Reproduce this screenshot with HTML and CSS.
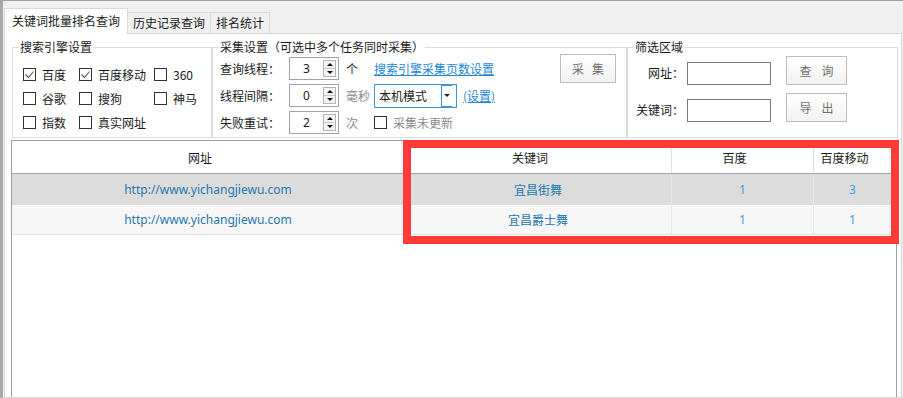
FILE: index.html
```html
<!DOCTYPE html>
<html lang="zh-CN">
<head>
    <meta charset="UTF-8">
    <title>关键词批量排名查询</title>
    <link rel="stylesheet" href="styles.css">
</head>
<body>
    <div class="window">
        <div class="tabs">
            <div class="tab active">关键词批量排名查询</div>
            <div class="tab">历史记录查询</div>
            <div class="tab">排名统计</div>
        </div>

        <div class="tab-page">
            <div class="settings">
                <fieldset class="group engines">
                    <legend>搜索引擎设置</legend>
                    <div class="check-grid">
                        <label class="check"><span class="box"><svg viewBox="0 0 11 11"><polyline points="1.5,5.5 4.5,8.5 9.5,2.5"/></svg></span>百度</label>
                        <label class="check"><span class="box"><svg viewBox="0 0 11 11"><polyline points="1.5,5.5 4.5,8.5 9.5,2.5"/></svg></span>百度移动</label>
                        <label class="check"><span class="box"></span>360</label>
                        <label class="check"><span class="box"></span>谷歌</label>
                        <label class="check"><span class="box"></span>搜狗</label>
                        <label class="check"><span class="box"></span>神马</label>
                        <label class="check"><span class="box"></span>指数</label>
                        <label class="check"><span class="box"></span>真实网址</label>
                    </div>
                </fieldset>

                <fieldset class="group collect">
                    <legend>采集设置（可选中多个任务同时采集）</legend>
                    <div class="collect-body">
                        <div class="collect-rows">
                            <div class="row">
                                <span class="row-label">查询线程：</span>
                                <div class="spinner"><span class="value">3</span><span class="spin"><i class="up"></i><i class="down"></i></span></div>
                                <span class="unit">个</span>
                                <a class="link" href="#">搜索引擎采集页数设置</a>
                            </div>
                            <div class="row">
                                <span class="row-label">线程间隔：</span>
                                <div class="spinner"><span class="value">0</span><span class="spin"><i class="up"></i><i class="down"></i></span></div>
                                <span class="unit muted">毫秒</span>
                                <div class="select"><span>本机模式</span><span class="drop"><i></i></span></div>
                                <a class="link" href="#">(设置)</a>
                            </div>
                            <div class="row">
                                <span class="row-label">失败重试：</span>
                                <div class="spinner"><span class="value">2</span><span class="spin"><i class="up"></i><i class="down"></i></span></div>
                                <span class="unit muted">次</span>
                                <label class="check muted"><span class="box"></span>采集未更新</label>
                            </div>
                        </div>
                        <button class="btn collect-btn"><span>采</span><span>集</span></button>
                    </div>
                </fieldset>

                <fieldset class="group filter">
                    <legend>筛选区域</legend>
                    <div class="filter-body">
                        <span class="filter-label">网址：</span>
                        <span class="input"></span>
                        <button class="btn wide"><span>查</span><span>询</span></button>
                        <span class="filter-label">关键词：</span>
                        <span class="input"></span>
                        <button class="btn wide"><span>导</span><span>出</span></button>
                    </div>
                </fieldset>
            </div>

            <div class="grid">
                <div class="grid-row head">
                    <div class="cell">网址</div>
                    <div class="cell">关键词</div>
                    <div class="cell">百度</div>
                    <div class="cell">百度移动</div>
                </div>
                <div class="grid-row odd">
                    <div class="cell url">http://www.yichangjiewu.com</div>
                    <div class="cell kw">宜昌街舞</div>
                    <div class="cell num">1</div>
                    <div class="cell num">3</div>
                </div>
                <div class="grid-row even">
                    <div class="cell url">http://www.yichangjiewu.com</div>
                    <div class="cell kw">宜昌爵士舞</div>
                    <div class="cell num">1</div>
                    <div class="cell num">1</div>
                </div>
            </div>
        </div>
    </div>

    <!-- 红框标注 -->
    <div class="marker"></div>
</body>
</html>
```

FILE: styles.css
```css
body {
    margin: 0;
    height: 398px;
    overflow: hidden;
    background-color: #f0f0f0;
    font-family: "Noto Sans CJK SC", sans-serif;
    font-size: 12px;
    color: #1a1a1a;
}
.window {
    height: 397px;
    border-top: 1px solid #a0a0a0;
    border-left: 3px solid #a9a9a9;
    display: flex;
    flex-direction: column;
}

/* Tabs */
.tabs {
    display: flex;
    align-items: flex-end;
    padding: 8px 0 0 1px;
    height: 24px;
}
.tab {
    height: 20px;
    line-height: 20px;
    padding: 0 5px;
    border: 1px solid #d9d9d9;
    border-bottom: none;
    border-left: none;
    background-color: #f0f0f0;
}
.tab.active {
    height: 25px;
    line-height: 23px;
    padding: 0 7px;
    border-left: 1px solid #d9d9d9;
    background-color: #fff;
    position: relative;
    margin-bottom: -1px;
    z-index: 1;
}

.tab-page {
    flex: 1;
    margin: 0 1px 0 1px;
    border: 1px solid #d9d9d9;
    background-color: #fff;
    display: flex;
    flex-direction: column;
}

/* Settings */
.settings {
    display: flex;
    padding: 5px 0 0 7px;
}
.group {
    margin: 0;
    padding: 0;
    min-width: 0;
    height: 99px;
    box-sizing: border-box;
    border: 1px solid #dcdcdc;
}
.group legend {
    margin-left: 6px;
    padding: 0 1px;
    line-height: 16px;
}
.engines {
    width: 200px;
}
.collect {
    width: 415px;
}
.filter {
    width: 271px;
}

.check-grid {
    display: grid;
    grid-template-columns: 56px 75px auto;
    grid-auto-rows: 24px;
    padding: 7px 0 0 10px;
}
.check {
    display: flex;
    align-items: center;
    gap: 6px;
}
.box {
    width: 11px;
    height: 11px;
    border: 1px solid #333;
    background-color: #fff;
    display: flex;
}
.box svg {
    width: 11px;
    height: 11px;
    fill: none;
    stroke: #555;
    stroke-width: 1.1;
}

.collect-body {
    display: flex;
    align-items: flex-start;
    padding: 0 10px 0 7px;
}
.collect-rows {
    display: flex;
    flex-direction: column;
    gap: 4px;
    margin-top: 2px;
}
.row {
    display: flex;
    align-items: center;
    height: 23px;
}
.row-label {
    width: 69px;
}
.spinner {
    width: 50px;
    height: 23px;
    box-sizing: border-box;
    border: 1px solid #a3a3a3;
    display: flex;
    align-items: center;
    padding: 1px 2px 1px 0;
}
.spinner .value {
    flex: 1;
    text-align: center;
    font-family: "Noto Sans", sans-serif;
}
.spin {
    width: 13px;
    height: 17px;
    border: 1px solid #b4b4b4;
    box-sizing: border-box;
    display: flex;
    flex-direction: column;
    background-color: #f3f3f3;
}
.spin i {
    flex: 1;
    display: flex;
    align-items: center;
    justify-content: center;
}
.spin i.up {
    border-bottom: 1px solid #c8c8c8;
}
.spin i::after {
    content: "";
    border-left: 3px solid transparent;
    border-right: 3px solid transparent;
}
.spin i.up::after {
    border-bottom: 3px solid #111;
}
.spin i.down::after {
    border-top: 3px solid #111;
}
.unit {
    width: 28px;
    margin-left: 7px;
}
.muted {
    color: #8a8a8a;
}
.link {
    color: #1d87d6;
    text-decoration: underline;
}
.select {
    width: 83px;
    height: 24px;
    box-sizing: border-box;
    border: 1px solid #3b96db;
    display: flex;
    align-items: center;
    padding-left: 4px;
    margin-right: 6px;
}
.select span:first-child {
    flex: 1;
}
.drop {
    width: 11px;
    height: 22px;
    box-sizing: border-box;
    border: 1px solid #3b96db;
    border-right: none;
    margin-right: 4px;
    display: flex;
    align-items: center;
    justify-content: center;
}
.drop i {
    border-left: 3px solid transparent;
    border-right: 3px solid transparent;
    border-top: 3px solid #222;
}

.btn {
    margin: -1px 0 0 auto;
    width: 56px;
    height: 29px;
    border: 1px solid #bcbcbc;
    background: linear-gradient(#ffffff, #f2f2f2);
    color: #6f6f6f;
    font-family: inherit;
    font-size: 12px;
    display: flex;
    align-items: center;
    justify-content: center;
    gap: 8px;
    padding: 0;
}
.btn.wide {
    width: 61px;
    height: 29px;
    gap: 10px;
    margin: 0 0 0 17px;
}

.filter-body {
    display: grid;
    grid-template-columns: 48px 85px auto;
    grid-template-rows: 29px 29px;
    row-gap: 8px;
    align-items: center;
    padding: 1px 0 0 8px;
}
.filter-label {
    text-align: right;
    margin-top: 3px;
}
.input {
    margin: 5px 0 0 3px;
    width: 84px;
    height: 23px;
    box-sizing: border-box;
    border: 1px solid #7a7a7a;
    background-color: #fff;
}

/* Grid */
.grid {
    flex: 1;
    margin: 2px 4px 0 6px;
    border: 1px solid #a0a0a0;
    border-bottom: none;
}
.grid-row {
    display: grid;
    grid-template-columns: 393px 267px 142px 78px;
    height: 31px;
}
.grid-row .cell {
    display: flex;
    align-items: center;
    justify-content: center;
    border-right: 1px solid #e6e6e6;
}
.grid-row.head {
    height: 33px;
    box-sizing: border-box;
    border-bottom: 1px solid #a6a6a6;
}
.head .cell {
    padding-right: 16px;
    border-right-color: #e3e3e3;
}
.grid-row.odd {
    background-color: #dcdcdc;
}
.grid-row.even {
    height: 30px;
    box-sizing: border-box;
    background-color: #f7f7f7;
    border-bottom: 1px solid #e3e3e3;
}
.cell.url {
    color: #2478b0;
    font-family: "Noto Sans", sans-serif;
}
.cell.kw {
    color: #1b78b2;
}
.cell.num {
    color: #3d9ce4;
    font-family: "Noto Sans", sans-serif;
}

.marker {
    position: absolute;
    left: 403px;
    top: 140px;
    width: 496px;
    height: 104px;
    box-sizing: border-box;
    border: 8px solid #fd3b3b;
}
```
